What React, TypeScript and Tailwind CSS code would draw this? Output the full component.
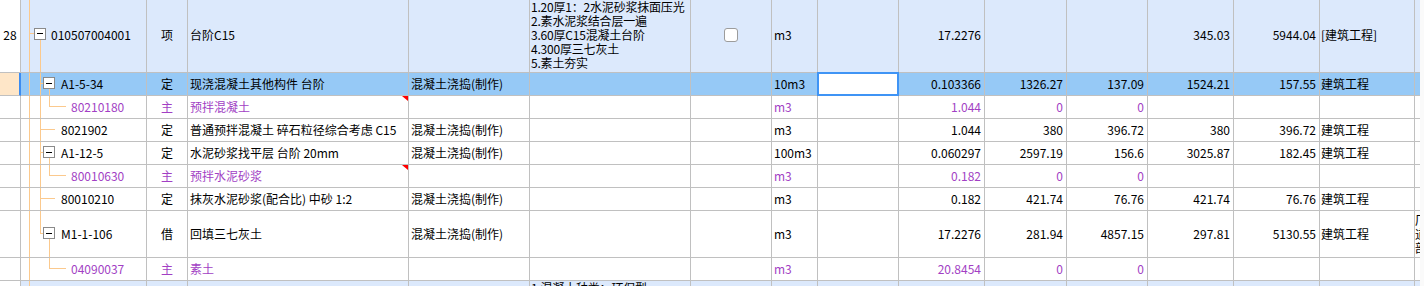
import React from "react";

// column widths incl. the 1px right border
const W = [
  "w-[21px]",
  "w-[126px]",
  "w-[41px]",
  "w-[221px]",
  "w-[121px]",
  "w-[161px]",
  "w-[81px]",
  "w-[46px]",
  "w-[81px]",
  "w-[86px]",
  "w-[82px]",
  "w-[81px]",
  "w-[86px]",
  "w-[86px]",
  "w-[95px]",
];

const LINE = "#fbc98d";

type Kind = "root" | "node" | "leaf" | "item" | "none";

type Row = {
  h: string;
  H: number;
  bg: string;
  kind: Kind;
  more?: boolean;
  pl?: string;
  num?: string;
  code?: string;
  type?: string;
  name?: string;
  work?: string;
  desc?: string[];
  check?: boolean;
  unit?: string;
  input?: boolean;
  qty?: string;
  a?: string;
  b?: string;
  c?: string;
  d?: string;
  prof?: string;
  purple?: boolean;
  flag?: boolean;
  sel?: boolean;
  extra?: string;
  top?: boolean;
};

const rows: Row[] = [
  {
    h: "h-[73px]",
    H: 72,
    bg: "bg-[#dce9fc]",
    kind: "root",
    pl: "pl-[30px]",
    num: "28",
    code: "010507004001",
    type: "项",
    name: "台阶C15",
    desc: ["1.20厚1：2水泥砂浆抹面压光", "2.素水泥浆结合层一遍", "3.60厚C15混凝土台阶", "4.300厚三七灰土", "5.素土夯实"],
    check: true,
    unit: "m3",
    qty: "17.2276",
    c: "345.03",
    d: "5944.04",
    prof: "[建筑工程]",
  },
  {
    h: "h-[23px]",
    H: 22,
    bg: "bg-[#96c9f6]",
    kind: "node",
    more: true,
    pl: "pl-[40px]",
    code: "A1-5-34",
    type: "定",
    name: "现浇混凝土其他构件 台阶",
    work: "混凝土浇捣(制作)",
    unit: "10m3",
    input: true,
    qty: "0.103366",
    a: "1326.27",
    b: "137.09",
    c: "1524.21",
    d: "157.55",
    prof: "建筑工程",
    sel: true,
  },
  {
    h: "h-[23px]",
    H: 22,
    bg: "bg-white",
    kind: "leaf",
    more: true,
    pl: "pl-[50px]",
    code: "80210180",
    type: "主",
    name: "预拌混凝土",
    unit: "m3",
    qty: "1.044",
    a: "0",
    b: "0",
    purple: true,
    flag: true,
  },
  {
    h: "h-[23px]",
    H: 22,
    bg: "bg-white",
    kind: "item",
    more: true,
    pl: "pl-[40px]",
    code: "8021902",
    type: "定",
    name: "普通预拌混凝土 碎石粒径综合考虑 C15",
    work: "混凝土浇捣(制作)",
    unit: "m3",
    qty: "1.044",
    a: "380",
    b: "396.72",
    c: "380",
    d: "396.72",
    prof: "建筑工程",
  },
  {
    h: "h-[23px]",
    H: 22,
    bg: "bg-white",
    kind: "node",
    more: true,
    pl: "pl-[40px]",
    code: "A1-12-5",
    type: "定",
    name: "水泥砂浆找平层 台阶 20mm",
    work: "混凝土浇捣(制作)",
    unit: "100m3",
    qty: "0.060297",
    a: "2597.19",
    b: "156.6",
    c: "3025.87",
    d: "182.45",
    prof: "建筑工程",
  },
  {
    h: "h-[23px]",
    H: 22,
    bg: "bg-white",
    kind: "leaf",
    more: true,
    pl: "pl-[50px]",
    code: "80010630",
    type: "主",
    name: "预拌水泥砂浆",
    unit: "m3",
    qty: "0.182",
    a: "0",
    b: "0",
    purple: true,
    flag: true,
  },
  {
    h: "h-[23px]",
    H: 22,
    bg: "bg-white",
    kind: "item",
    more: true,
    pl: "pl-[40px]",
    code: "80010210",
    type: "定",
    name: "抹灰水泥砂浆(配合比) 中砂 1:2",
    work: "混凝土浇捣(制作)",
    unit: "m3",
    qty: "0.182",
    a: "421.74",
    b: "76.76",
    c: "421.74",
    d: "76.76",
    prof: "建筑工程",
  },
  {
    h: "h-[47px]",
    H: 46,
    bg: "bg-white",
    kind: "node",
    more: false,
    pl: "pl-[40px]",
    code: "M1-1-106",
    type: "借",
    name: "回填三七灰土",
    work: "混凝土浇捣(制作)",
    unit: "m3",
    qty: "17.2276",
    a: "281.94",
    b: "4857.15",
    c: "297.81",
    d: "5130.55",
    prof: "建筑工程",
    extra: "厂道部",
  },
  {
    h: "h-[23px]",
    H: 22,
    bg: "bg-white",
    kind: "leaf",
    more: false,
    pl: "pl-[50px]",
    code: "04090037",
    type: "主",
    name: "素土",
    unit: "m3",
    qty: "20.8454",
    a: "0",
    b: "0",
    purple: true,
  },
  {
    h: "h-[80px]",
    H: 79,
    bg: "bg-[#dce9fc]",
    kind: "none",
    desc: ["1.混凝土种类：环保型", "2.混凝土强度等级：C20", "3.部位：散水"],
    top: true,
  },
];

function Tree({ kind, H, more }: { kind: Kind; H: number; more?: boolean }) {
  const L = H + 1;
  const c = kind === "root" ? 33.5 : Math.floor(H / 2) - 0.5;
  const ln = (x1: number, y1: number, x2: number, y2: number, k: string, color = LINE) => (
    <line key={k} x1={x1} y1={y1} x2={x2} y2={y2} stroke={color} strokeWidth={1} />
  );
  const parts: React.ReactNode[] = [ln(8.5, 0, 8.5, L, "main")];

  if (kind === "root") {
    parts.push(ln(8, c, 13, c, "hc"));
    parts.push(<rect key="box" x={13.5} y={28.5} width={11} height={11} fill="#fff" stroke="#8a8a8a" />);
    parts.push(ln(16, c, 22, c, "minus", "#000"));
    parts.push(ln(19.5, 40, 19.5, L, "child"));
  }
  if (kind === "node") {
    parts.push(ln(19.5, 0, 19.5, more ? L : c, "lvl2"));
    parts.push(ln(19.5, c, 22, c, "hc"));
    parts.push(<rect key="box" x={22.5} y={c - 6} width={11} height={11} fill="#fff" stroke="#8a8a8a" />);
    parts.push(ln(25, c, 31, c, "minus", "#000"));
    parts.push(ln(28.5, c + 5.5, 28.5, L, "child"));
  }
  if (kind === "leaf") {
    if (more) parts.push(ln(19.5, 0, 19.5, L, "lvl2"));
    parts.push(ln(28.5, 0, 28.5, c, "v3"));
    parts.push(ln(28.5, c, 45, c, "h3"));
  }
  if (kind === "item") {
    parts.push(ln(19.5, 0, 19.5, L, "lvl2"));
    parts.push(ln(19.5, c, 34, c, "h2"));
  }

  return (
    <svg className="absolute left-0 top-0" width={125} height={L} shapeRendering="crispEdges">
      {parts}
    </svg>
  );
}

const cell = "shrink-0 h-full border-r border-b border-[#c0c0c0] flex items-center overflow-hidden whitespace-nowrap";

function GridRow({ r }: { r: Row }) {
  const tone = r.purple ? "text-[#a23fc4]" : "text-black";
  const pad = r.kind === "root" ? "pb-[3px]" : "";
  return (
    <div className={`flex ${r.h} ${r.bg} ${tone}`}>
      <div
        className={`${W[0]} ${cell} ${pad} justify-center text-black ${
          r.sel ? "bg-[#fee6c8] border-r-2 border-r-[#3b8cf2]" : "bg-white"
        }`}
      >
        {r.num}
      </div>
      <div className={`${W[1]} ${cell} ${pad} relative ${r.pl ?? ""}`}>
        <Tree kind={r.kind} H={r.H} more={r.more} />
        <span className="relative">{r.code}</span>
      </div>
      <div className={`${W[2]} ${cell} ${pad} justify-center`}>{r.type}</div>
      <div className={`${W[3]} ${cell} ${pad} relative pl-[2px]`}>
        {r.name}
        {r.flag && (
          <span className="absolute right-0 top-0 w-0 h-0 border-t-[5px] border-l-[6px] border-t-[#ff0000] border-l-transparent" />
        )}
      </div>
      <div className={`${W[4]} ${cell} ${pad} pl-[2px]`}>{r.work}</div>
      <div className={`${W[5]} ${cell} ${pad} pl-[1px] ${r.top ? "items-start" : ""}`}>
        {r.desc && (
          <div className="flex flex-col leading-[14px] tracking-[-0.2px]">
            {r.desc.map((d) => (
              <span key={d}>{d}</span>
            ))}
          </div>
        )}
      </div>
      <div className={`${W[6]} ${cell} ${pad} justify-center`}>
        {r.check && <span className="w-[14px] h-[14px] rounded-[3px] border border-[#9c9c9c] bg-white" />}
      </div>
      <div className={`${W[7]} ${cell} ${pad} pl-[2px]`}>{r.unit}</div>
      <div className={`${W[8]} ${cell} ${pad} relative overflow-visible`}>
        {r.input && (
          <span className="absolute -left-[1px] -top-[1px] -right-[1px] -bottom-[1px] border-2 border-[#3f94f5] bg-white" />
        )}
      </div>
      <div className={`${W[9]} ${cell} ${pad} justify-end pr-[3px]`}>{r.qty}</div>
      <div className={`${W[10]} ${cell} ${pad} justify-end pr-[3px]`}>{r.a}</div>
      <div className={`${W[11]} ${cell} ${pad} justify-end pr-[3px]`}>{r.b}</div>
      <div className={`${W[12]} ${cell} ${pad} justify-end pr-[3px]`}>{r.c}</div>
      <div className={`${W[13]} ${cell} ${pad} justify-end pr-[3px]`}>{r.d}</div>
      <div className={`${W[14]} ${cell} ${pad} pl-[1px]`}>{r.prof}</div>
      <div className="w-[5px] shrink-0 h-full border-b border-[#c0c0c0] flex items-center overflow-hidden">
        {r.extra && <span className="w-[5px] whitespace-normal break-all leading-[14px] text-black">{r.extra}</span>}
      </div>
      <div className="w-[4px] shrink-0 h-full bg-[#fafafa]" />
    </div>
  );
}

export default function App() {
  return (
    <div className="w-[1424px] h-[286px] overflow-hidden bg-white text-[12px] leading-[14px] [font-family:'Noto_Sans_CJK_SC',sans-serif]">
      {rows.map((r, i) => (
        <GridRow key={i} r={r} />
      ))}
    </div>
  );
}
